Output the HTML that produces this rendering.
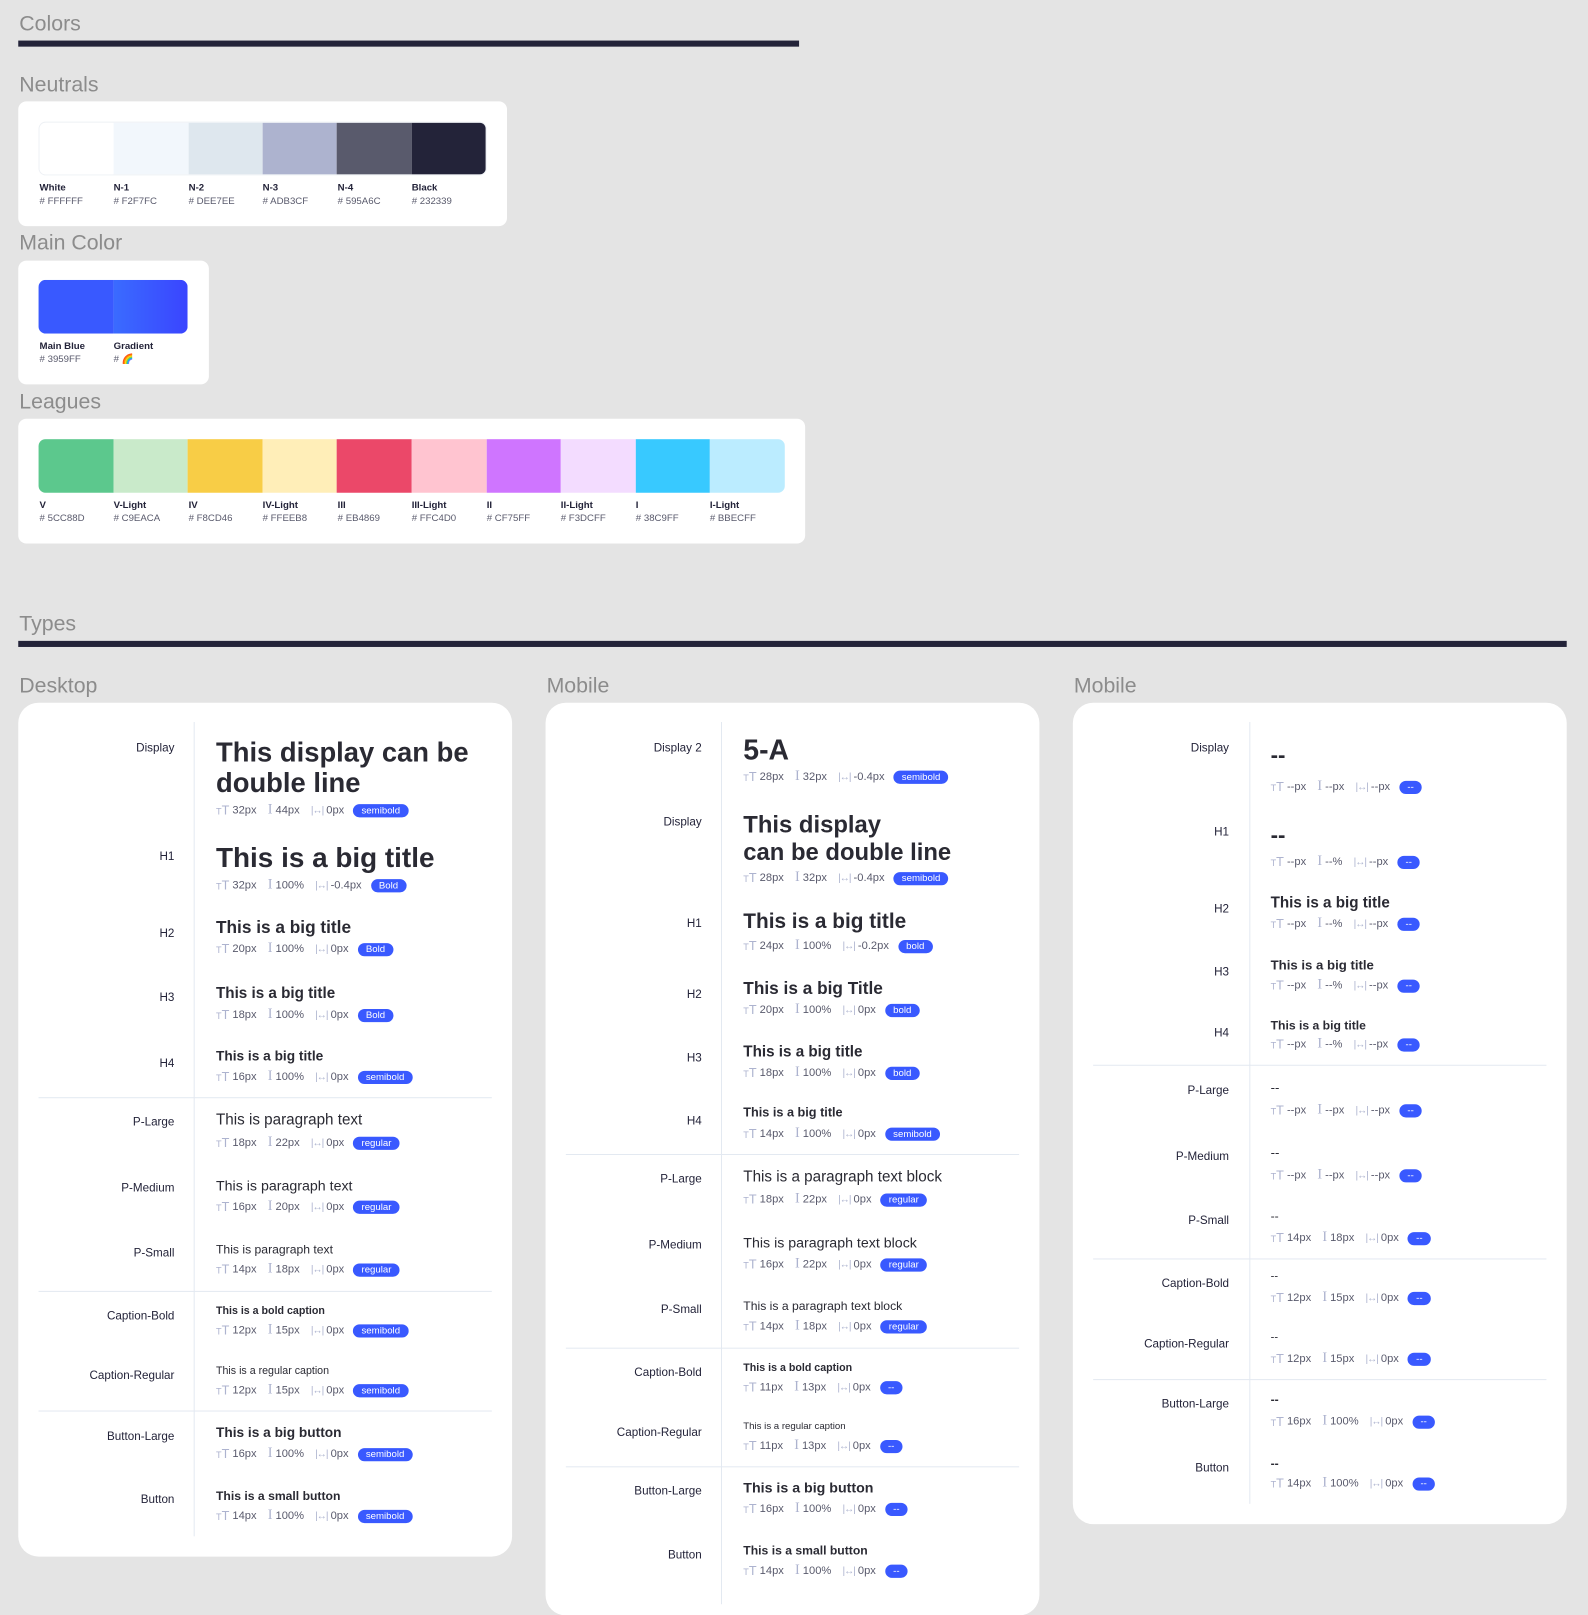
<!DOCTYPE html>
<html><head><meta charset="utf-8"><style>
*{margin:0;padding:0;box-sizing:border-box}
html,body{width:1588px;height:1590px;overflow:hidden;background:#E4E4E4;font-family:"Liberation Sans",sans-serif}
#w{position:absolute;left:0;top:0;width:1566px;height:1568px;transform:scale(1.01405);transform-origin:0 0}
.a{position:absolute}
.h{position:absolute;font-size:21px;color:#8C8C8C;line-height:24px;white-space:nowrap}
.bar{position:absolute;background:#232339;height:6px}
.card{position:absolute;background:#fff;border-radius:8px}
.tc{position:absolute;background:#fff;border-radius:20px}
.sw{position:absolute;display:flex;border-radius:7px;overflow:hidden;height:53px}
.sw div{flex:1}
.cl{position:absolute;font-size:9.5px;line-height:13px;color:#232339}
.cl b{display:block;font-weight:bold}
.cl span{color:#595A6C}
.vl{position:absolute;width:1px;background:#E3E9F1}
.hl{position:absolute;height:1px;background:#E3E9F1}
.l{position:absolute;width:160px;text-align:right;font-size:11.5px;line-height:14px;color:#232339}
.t{position:absolute;color:#2A2A33;white-space:nowrap;line-height:1}
.m{position:absolute;font-size:11px;color:#595A6C;display:flex;align-items:center;height:14px;white-space:nowrap}
.m i{font-style:normal;color:#ADB3CF;margin:0 3px 0 0;font-size:12.5px}
.m i.f{margin-left:0}
.m i.g{margin-left:11px;font-family:"Liberation Serif",serif;font-size:14px}
.m i.s{margin-left:11px;font-size:10px;letter-spacing:-1px}
.m b{background:#3959FF;color:#fff;border-radius:7px;height:13px;font-size:9.5px;font-weight:normal;padding:0 8px;line-height:13px;margin-left:9px}
.m i.f small{font-size:9px}
</style></head><body><div id="w">

<div class="h" style="left:19px;top:12px">Colors</div>
<div class="bar" style="left:18px;top:40px;width:770px"></div>

<div class="h" style="left:19px;top:72px">Neutrals</div>
<div class="card" style="left:18px;top:100px;width:482px;height:123px"></div>
<div class="sw" style="left:38px;top:120px;width:442px;border:1px solid #EEF1F5">
<div style="background:#FFFFFF"></div><div style="background:#F2F7FC"></div><div style="background:#DEE7EE"></div><div style="background:#ADB3CF"></div><div style="background:#595A6C"></div><div style="background:#232339"></div></div>
<div class="cl" style="left:39px;top:179px"><b>White</b><span># FFFFFF</span></div>
<div class="cl" style="left:112px;top:179px"><b>N-1</b><span># F2F7FC</span></div>
<div class="cl" style="left:186px;top:179px"><b>N-2</b><span># DEE7EE</span></div>
<div class="cl" style="left:259px;top:179px"><b>N-3</b><span># ADB3CF</span></div>
<div class="cl" style="left:333px;top:179px"><b>N-4</b><span># 595A6C</span></div>
<div class="cl" style="left:406px;top:179px"><b>Black</b><span># 232339</span></div>

<div class="h" style="left:19px;top:228px">Main Color</div>
<div class="card" style="left:18px;top:257px;width:188px;height:122px"></div>
<div class="sw" style="left:38px;top:276px;width:147px">
<div style="background:#3959FF"></div><div style="background:linear-gradient(90deg,#3A6BFF,#3A45FF)"></div></div>
<div class="cl" style="left:39px;top:335px"><b>Main Blue</b><span># 3959FF</span></div>
<div class="cl" style="left:112px;top:335px"><b>Gradient</b><span># 🌈</span></div>

<div class="h" style="left:19px;top:385px">Leagues</div>
<div class="card" style="left:18px;top:413px;width:776px;height:123px"></div>
<div class="sw" style="left:38px;top:433px;width:736px">
<div style="background:#5CC88D"></div><div style="background:#C9EACA"></div><div style="background:#F8CD46"></div><div style="background:#FFEEB8"></div><div style="background:#EB4869"></div><div style="background:#FFC4D0"></div><div style="background:#CF75FF"></div><div style="background:#F3DCFF"></div><div style="background:#38C9FF"></div><div style="background:#BBECFF"></div></div>
<div class="cl" style="left:39px;top:492px"><b>V</b><span># 5CC88D</span></div>
<div class="cl" style="left:112px;top:492px"><b>V-Light</b><span># C9EACA</span></div>
<div class="cl" style="left:186px;top:492px"><b>IV</b><span># F8CD46</span></div>
<div class="cl" style="left:259px;top:492px"><b>IV-Light</b><span># FFEEB8</span></div>
<div class="cl" style="left:333px;top:492px"><b>III</b><span># EB4869</span></div>
<div class="cl" style="left:406px;top:492px"><b>III-Light</b><span># FFC4D0</span></div>
<div class="cl" style="left:480px;top:492px"><b>II</b><span># CF75FF</span></div>
<div class="cl" style="left:553px;top:492px"><b>II-Light</b><span># F3DCFF</span></div>
<div class="cl" style="left:627px;top:492px"><b>I</b><span># 38C9FF</span></div>
<div class="cl" style="left:700px;top:492px"><b>I-Light</b><span># BBECFF</span></div>

<div class="h" style="left:19px;top:604px">Types</div>
<div class="bar" style="left:18px;top:632px;width:1527px"></div>

<div class="h" style="left:19px;top:665px">Desktop</div>
<div class="h" style="left:539px;top:665px">Mobile</div>
<div class="h" style="left:1059px;top:665px">Mobile</div>

<div class="tc" style="left:18px;top:693px;width:487px;height:842px"></div>
<div class="tc" style="left:538px;top:693px;width:487px;height:900px"></div>
<div class="tc" style="left:1058px;top:693px;width:487px;height:810px"></div>

<div class="vl" style="left:191px;top:712px;height:803px"></div>
<div class="vl" style="left:711px;top:712px;height:870px"></div>
<div class="vl" style="left:1232px;top:712px;height:771px"></div>
<div class="hl" style="left:38px;top:1082px;width:447px"></div>
<div class="hl" style="left:38px;top:1273px;width:447px"></div>
<div class="hl" style="left:38px;top:1391px;width:447px"></div>
<div class="hl" style="left:558px;top:1138px;width:447px"></div>
<div class="hl" style="left:558px;top:1329px;width:447px"></div>
<div class="hl" style="left:558px;top:1446px;width:447px"></div>
<div class="hl" style="left:1078px;top:1050px;width:447px"></div>
<div class="hl" style="left:1078px;top:1241px;width:447px"></div>
<div class="hl" style="left:1078px;top:1360px;width:447px"></div>

<!-- Desktop -->
<div class="l" style="left:12px;top:731px">Display</div>
<div class="t" style="left:213px;top:727px;font-size:27px;line-height:30px;font-weight:bold">This display can be<br>double line</div>
<div class="m" style="left:213px;top:792px"><i class="f"><small>T</small>T</i>32px<i class="g">I</i>44px<i class="s">|↔|</i>0px<b>semibold</b></div>

<div class="l" style="left:12px;top:838px">H1</div>
<div class="t" style="left:213px;top:832px;font-size:27.5px;font-weight:bold">This is a big title</div>
<div class="m" style="left:213px;top:866px"><i class="f"><small>T</small>T</i>32px<i class="g">I</i>100%<i class="s">|↔|</i>-0.4px<b>Bold</b></div>

<div class="l" style="left:12px;top:914px">H2</div>
<div class="t" style="left:213px;top:906px;font-size:17px;font-weight:bold">This is a big title</div>
<div class="m" style="left:213px;top:929px"><i class="f"><small>T</small>T</i>20px<i class="g">I</i>100%<i class="s">|↔|</i>0px<b>Bold</b></div>

<div class="l" style="left:12px;top:977px">H3</div>
<div class="t" style="left:213px;top:972px;font-size:15px;font-weight:bold">This is a big title</div>
<div class="m" style="left:213px;top:994px"><i class="f"><small>T</small>T</i>18px<i class="g">I</i>100%<i class="s">|↔|</i>0px<b>Bold</b></div>

<div class="l" style="left:12px;top:1042px">H4</div>
<div class="t" style="left:213px;top:1035px;font-size:13.5px;font-weight:bold">This is a big title</div>
<div class="m" style="left:213px;top:1055px"><i class="f"><small>T</small>T</i>16px<i class="g">I</i>100%<i class="s">|↔|</i>0px<b>semibold</b></div>

<div class="l" style="left:12px;top:1100px">P-Large</div>
<div class="t" style="left:213px;top:1097px;font-size:15px">This is paragraph text</div>
<div class="m" style="left:213px;top:1120px"><i class="f"><small>T</small>T</i>18px<i class="g">I</i>22px<i class="s">|↔|</i>0px<b>regular</b></div>

<div class="l" style="left:12px;top:1165px">P-Medium</div>
<div class="t" style="left:213px;top:1162px;font-size:14px">This is paragraph text</div>
<div class="m" style="left:213px;top:1183px"><i class="f"><small>T</small>T</i>16px<i class="g">I</i>20px<i class="s">|↔|</i>0px<b>regular</b></div>

<div class="l" style="left:12px;top:1229px">P-Small</div>
<div class="t" style="left:213px;top:1226px;font-size:12px">This is paragraph text</div>
<div class="m" style="left:213px;top:1245px"><i class="f"><small>T</small>T</i>14px<i class="g">I</i>18px<i class="s">|↔|</i>0px<b>regular</b></div>

<div class="l" style="left:12px;top:1291px">Caption-Bold</div>
<div class="t" style="left:213px;top:1288px;font-size:10.5px;font-weight:bold">This is a bold caption</div>
<div class="m" style="left:213px;top:1305px"><i class="f"><small>T</small>T</i>12px<i class="g">I</i>15px<i class="s">|↔|</i>0px<b>semibold</b></div>

<div class="l" style="left:12px;top:1350px">Caption-Regular</div>
<div class="t" style="left:213px;top:1347px;font-size:10.5px">This is a regular caption</div>
<div class="m" style="left:213px;top:1364px"><i class="f"><small>T</small>T</i>12px<i class="g">I</i>15px<i class="s">|↔|</i>0px<b>semibold</b></div>

<div class="l" style="left:12px;top:1410px">Button-Large</div>
<div class="t" style="left:213px;top:1406px;font-size:13.5px;font-weight:bold">This is a big button</div>
<div class="m" style="left:213px;top:1427px"><i class="f"><small>T</small>T</i>16px<i class="g">I</i>100%<i class="s">|↔|</i>0px<b>semibold</b></div>

<div class="l" style="left:12px;top:1472px">Button</div>
<div class="t" style="left:213px;top:1469px;font-size:12px;font-weight:bold">This is a small button</div>
<div class="m" style="left:213px;top:1488px"><i class="f"><small>T</small>T</i>14px<i class="g">I</i>100%<i class="s">|↔|</i>0px<b>semibold</b></div>

<!-- Mobile middle -->
<div class="l" style="left:532px;top:731px">Display 2</div>
<div class="t" style="left:733px;top:726px;font-size:28px;font-weight:bold">5-A</div>
<div class="m" style="left:733px;top:759px"><i class="f"><small>T</small>T</i>28px<i class="g">I</i>32px<i class="s">|↔|</i>-0.4px<b>semibold</b></div>

<div class="l" style="left:532px;top:804px">Display</div>
<div class="t" style="left:733px;top:800px;font-size:23.5px;line-height:27px;font-weight:bold">This display<br>can be double line</div>
<div class="m" style="left:733px;top:859px"><i class="f"><small>T</small>T</i>28px<i class="g">I</i>32px<i class="s">|↔|</i>-0.4px<b>semibold</b></div>

<div class="l" style="left:532px;top:904px">H1</div>
<div class="t" style="left:733px;top:899px;font-size:20.5px;font-weight:bold">This is a big title</div>
<div class="m" style="left:733px;top:926px"><i class="f"><small>T</small>T</i>24px<i class="g">I</i>100%<i class="s">|↔|</i>-0.2px<b>bold</b></div>

<div class="l" style="left:532px;top:974px">H2</div>
<div class="t" style="left:733px;top:966px;font-size:17px;font-weight:bold">This is a big Title</div>
<div class="m" style="left:733px;top:989px"><i class="f"><small>T</small>T</i>20px<i class="g">I</i>100%<i class="s">|↔|</i>0px<b>bold</b></div>

<div class="l" style="left:532px;top:1037px">H3</div>
<div class="t" style="left:733px;top:1030px;font-size:15px;font-weight:bold">This is a big title</div>
<div class="m" style="left:733px;top:1051px"><i class="f"><small>T</small>T</i>18px<i class="g">I</i>100%<i class="s">|↔|</i>0px<b>bold</b></div>

<div class="l" style="left:532px;top:1099px">H4</div>
<div class="t" style="left:733px;top:1091px;font-size:12.5px;font-weight:bold">This is a big title</div>
<div class="m" style="left:733px;top:1111px"><i class="f"><small>T</small>T</i>14px<i class="g">I</i>100%<i class="s">|↔|</i>0px<b>semibold</b></div>

<div class="l" style="left:532px;top:1156px">P-Large</div>
<div class="t" style="left:733px;top:1153px;font-size:15px">This is a paragraph text block</div>
<div class="m" style="left:733px;top:1176px"><i class="f"><small>T</small>T</i>18px<i class="g">I</i>22px<i class="s">|↔|</i>0px<b>regular</b></div>

<div class="l" style="left:532px;top:1221px">P-Medium</div>
<div class="t" style="left:733px;top:1218px;font-size:14px">This is paragraph text block</div>
<div class="m" style="left:733px;top:1240px"><i class="f"><small>T</small>T</i>16px<i class="g">I</i>22px<i class="s">|↔|</i>0px<b>regular</b></div>

<div class="l" style="left:532px;top:1285px">P-Small</div>
<div class="t" style="left:733px;top:1282px;font-size:12px">This is a paragraph text block</div>
<div class="m" style="left:733px;top:1301px"><i class="f"><small>T</small>T</i>14px<i class="g">I</i>18px<i class="s">|↔|</i>0px<b>regular</b></div>

<div class="l" style="left:532px;top:1347px">Caption-Bold</div>
<div class="t" style="left:733px;top:1344px;font-size:10.5px;font-weight:bold">This is a bold caption</div>
<div class="m" style="left:733px;top:1361px"><i class="f"><small>T</small>T</i>11px<i class="g">I</i>13px<i class="s">|↔|</i>0px<b>--</b></div>

<div class="l" style="left:532px;top:1406px">Caption-Regular</div>
<div class="t" style="left:733px;top:1402px;font-size:9.5px">This is a regular caption</div>
<div class="m" style="left:733px;top:1419px"><i class="f"><small>T</small>T</i>11px<i class="g">I</i>13px<i class="s">|↔|</i>0px<b>--</b></div>

<div class="l" style="left:532px;top:1464px">Button-Large</div>
<div class="t" style="left:733px;top:1460px;font-size:14px;font-weight:bold">This is a big button</div>
<div class="m" style="left:733px;top:1481px"><i class="f"><small>T</small>T</i>16px<i class="g">I</i>100%<i class="s">|↔|</i>0px<b>--</b></div>

<div class="l" style="left:532px;top:1527px">Button</div>
<div class="t" style="left:733px;top:1523px;font-size:12px;font-weight:bold">This is a small button</div>
<div class="m" style="left:733px;top:1542px"><i class="f"><small>T</small>T</i>14px<i class="g">I</i>100%<i class="s">|↔|</i>0px<b>--</b></div>

<!-- Mobile right -->
<div class="l" style="left:1052px;top:731px">Display</div>
<div class="t" style="left:1253px;top:734px;font-size:22px;font-weight:bold">--</div>
<div class="m" style="left:1253px;top:769px"><i class="f"><small>T</small>T</i>--px<i class="g">I</i>--px<i class="s">|↔|</i>--px<b>--</b></div>

<div class="l" style="left:1052px;top:814px">H1</div>
<div class="t" style="left:1253px;top:813px;font-size:22px;font-weight:bold">--</div>
<div class="m" style="left:1253px;top:843px"><i class="f"><small>T</small>T</i>--px<i class="g">I</i>--%<i class="s">|↔|</i>--px<b>--</b></div>

<div class="l" style="left:1052px;top:890px">H2</div>
<div class="t" style="left:1253px;top:883px;font-size:15px;font-weight:bold">This is a big title</div>
<div class="m" style="left:1253px;top:904px"><i class="f"><small>T</small>T</i>--px<i class="g">I</i>--%<i class="s">|↔|</i>--px<b>--</b></div>

<div class="l" style="left:1052px;top:952px">H3</div>
<div class="t" style="left:1253px;top:945px;font-size:13px;font-weight:bold">This is a big title</div>
<div class="m" style="left:1253px;top:965px"><i class="f"><small>T</small>T</i>--px<i class="g">I</i>--%<i class="s">|↔|</i>--px<b>--</b></div>

<div class="l" style="left:1052px;top:1012px">H4</div>
<div class="t" style="left:1253px;top:1005px;font-size:12px;font-weight:bold">This is a big title</div>
<div class="m" style="left:1253px;top:1023px"><i class="f"><small>T</small>T</i>--px<i class="g">I</i>--%<i class="s">|↔|</i>--px<b>--</b></div>

<div class="l" style="left:1052px;top:1069px">P-Large</div>
<div class="t" style="left:1253px;top:1066px;font-size:13px">--</div>
<div class="m" style="left:1253px;top:1088px"><i class="f"><small>T</small>T</i>--px<i class="g">I</i>--px<i class="s">|↔|</i>--px<b>--</b></div>

<div class="l" style="left:1052px;top:1134px">P-Medium</div>
<div class="t" style="left:1253px;top:1130px;font-size:13px">--</div>
<div class="m" style="left:1253px;top:1152px"><i class="f"><small>T</small>T</i>--px<i class="g">I</i>--px<i class="s">|↔|</i>--px<b>--</b></div>

<div class="l" style="left:1052px;top:1197px">P-Small</div>
<div class="t" style="left:1253px;top:1193px;font-size:12px">--</div>
<div class="m" style="left:1253px;top:1214px"><i class="f"><small>T</small>T</i>14px<i class="g">I</i>18px<i class="s">|↔|</i>0px<b>--</b></div>

<div class="l" style="left:1052px;top:1259px">Caption-Bold</div>
<div class="t" style="left:1253px;top:1254px;font-size:11px">--</div>
<div class="m" style="left:1253px;top:1273px"><i class="f"><small>T</small>T</i>12px<i class="g">I</i>15px<i class="s">|↔|</i>0px<b>--</b></div>

<div class="l" style="left:1052px;top:1319px">Caption-Regular</div>
<div class="t" style="left:1253px;top:1314px;font-size:11px">--</div>
<div class="m" style="left:1253px;top:1333px"><i class="f"><small>T</small>T</i>12px<i class="g">I</i>15px<i class="s">|↔|</i>0px<b>--</b></div>

<div class="l" style="left:1052px;top:1378px">Button-Large</div>
<div class="t" style="left:1253px;top:1374px;font-size:12px;font-weight:bold">--</div>
<div class="m" style="left:1253px;top:1395px"><i class="f"><small>T</small>T</i>16px<i class="g">I</i>100%<i class="s">|↔|</i>0px<b>--</b></div>

<div class="l" style="left:1052px;top:1441px">Button</div>
<div class="t" style="left:1253px;top:1437px;font-size:12px;font-weight:bold">--</div>
<div class="m" style="left:1253px;top:1456px"><i class="f"><small>T</small>T</i>14px<i class="g">I</i>100%<i class="s">|↔|</i>0px<b>--</b></div>

</div></body></html>
